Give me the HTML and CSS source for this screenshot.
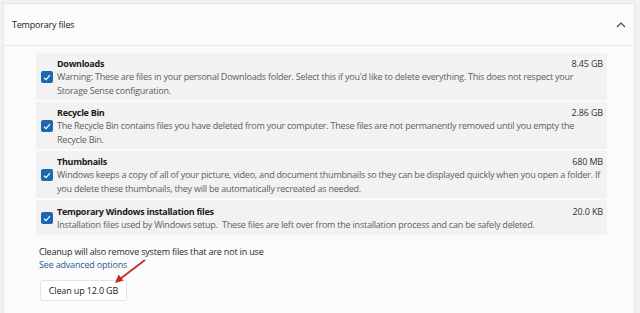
FILE: index.html
```html
<!DOCTYPE html>
<html>
<head>
<meta charset="utf-8">
<link rel="stylesheet" href="styles.css">
</head>
<body>
<div class="card">
  <div class="header">
    <span class="header-title">Temporary files</span>
    <svg class="chevron" width="10" height="6" viewBox="0 0 10 6"><path d="M1 5 L5 1 L9 5" fill="none" stroke="#444" stroke-width="1.1"/></svg>
  </div>
  <div class="content">
    <div class="list">
      <div class="row">
        <span class="check"><svg width="8" height="7" viewBox="0 0 8 7"><path d="M1 3.8 L3 5.6 L7 1.2" fill="none" stroke="#fff" stroke-width="1.2"/></svg></span>
        <div class="info">
          <div class="top"><span class="name">Downloads</span><span class="size">8.45 GB</span></div>
          <div class="desc">Warning: These are files in your personal Downloads folder. Select this if you'd like to delete everything. This does not respect your Storage Sense configuration.</div>
        </div>
      </div>
      <div class="row">
        <span class="check"><svg width="8" height="7" viewBox="0 0 8 7"><path d="M1 3.8 L3 5.6 L7 1.2" fill="none" stroke="#fff" stroke-width="1.2"/></svg></span>
        <div class="info">
          <div class="top"><span class="name">Recycle Bin</span><span class="size">2.86 GB</span></div>
          <div class="desc">The Recycle Bin contains files you have deleted from your computer. These files are not permanently removed until you empty the Recycle Bin.</div>
        </div>
      </div>
      <div class="row">
        <span class="check"><svg width="8" height="7" viewBox="0 0 8 7"><path d="M1 3.8 L3 5.6 L7 1.2" fill="none" stroke="#fff" stroke-width="1.2"/></svg></span>
        <div class="info">
          <div class="top"><span class="name">Thumbnails</span><span class="size">680 MB</span></div>
          <div class="desc">Windows keeps a copy of all of your picture, video, and document thumbnails so they can be displayed quickly when you open a folder. If you delete these thumbnails, they will be automatically recreated as needed.</div>
        </div>
      </div>
      <div class="row">
        <span class="check"><svg width="8" height="7" viewBox="0 0 8 7"><path d="M1 3.8 L3 5.6 L7 1.2" fill="none" stroke="#fff" stroke-width="1.2"/></svg></span>
        <div class="info">
          <div class="top"><span class="name">Temporary Windows installation files</span><span class="size">20.0 KB</span></div>
          <div class="desc">Installation files used by Windows setup.&nbsp; These files are left over from the installation process and can be safely deleted.</div>
        </div>
      </div>
    </div>
    <div class="note">Cleanup will also remove system files that are not in use</div>
    <div class="link">See advanced options</div>
    <button class="btn">Clean up 12.0 GB</button>
  </div>
</div>
<svg class="arrow" width="40" height="30" viewBox="0 0 40 30"><path d="M33 1 L8 20" stroke="#c3262a" stroke-width="1.6" fill="none"/><path d="M3 24 L6.5 15.5 L11.5 21.5 Z" fill="#c3262a"/></svg>
</body>
</html>
```
FILE: styles.css
```css
html, body {
  margin: 0;
  padding: 0;
  background: #f1f1f1;
  font-family: "Open Sans", "Noto Sans", sans-serif;
  color: #1b1b1b;
}
body {
  width: 640px;
  height: 313px;
  overflow: hidden;
  position: relative;
}
.card {
  margin: 3px 5px 0 3px;
  height: 320px;
  background: #fbfbfb;
  border: 1px solid #e6e6e6;
  border-bottom: none;
  box-sizing: border-box;
}
.header {
  height: 41px;
  display: flex;
  align-items: center;
  justify-content: space-between;
  padding: 0 8px 0 8px;
  border-bottom: 1px solid #e8e8e8;
}
.header-title {
  font-size: 9px;
  letter-spacing: -0.2px;
  color: #1b1b1b;
}
.content {
  padding: 7px 27px 0 32px;
}
.list {
  display: flex;
  flex-direction: column;
  gap: 2px;
}
.row {
  display: flex;
  align-items: center;
  background: #f2f2f2;
  padding: 4px 4px 3px 5px;
  min-height: 28px;
}
.check {
  width: 12px;
  height: 12px;
  border-radius: 2px;
  background: #1c67b2;
  display: flex;
  align-items: center;
  justify-content: center;
  flex: none;
  margin-right: 4px;
}
.info {
  flex: 1;
  min-width: 0;
}
.top {
  display: flex;
  justify-content: space-between;
  line-height: 13px;
}
.name {
  font-weight: 700;
  font-size: 9px;
  letter-spacing: -0.3px;
  color: #1a1a1a;
}
.size {
  font-size: 9px;
  letter-spacing: -0.15px;
  color: #333;
}
.desc {
  font-size: 9px;
  letter-spacing: -0.22px;
  line-height: 13.5px;
  color: #606060;
}
.note {
  margin-top: 10px;
  padding-left: 3px;
  font-size: 9px;
  letter-spacing: -0.18px;
  line-height: 13px;
  color: #2a2a2a;
}
.link {
  padding-left: 3px;
  font-size: 9px;
  letter-spacing: -0.18px;
  line-height: 13px;
  color: #1d5b93;
}
.btn {
  margin: 9px 0 0 4px;
  display: block;
  width: 87px;
  height: 21px;
  background: #fff;
  border: 1px solid #e4e4e4;
  border-radius: 3px;
  font-family: "Open Sans", "Noto Sans", sans-serif;
  font-size: 9px;
  letter-spacing: -0.15px;
  color: #1b1b1b;
  padding: 0;
}
.arrow {
  position: absolute;
  left: 112px;
  top: 259px;
}
```
